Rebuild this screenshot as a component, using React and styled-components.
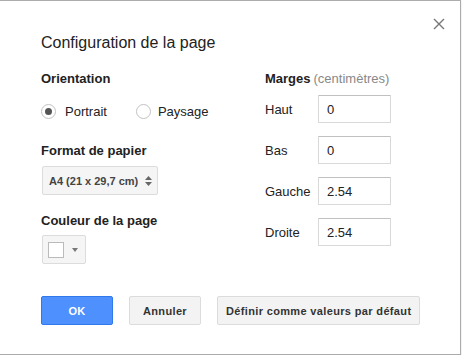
import React from 'react';
import styled, { createGlobalStyle } from 'styled-components';

const GlobalStyle = createGlobalStyle`
  html, body {
    margin: 0;
    padding: 0;
    background: #fff;
  }
  body {
    font-family: "Liberation Sans", Arial, sans-serif;
    color: #222;
  }
`

const Dialog = styled.div`
  box-sizing: border-box;
  width: 461px;
  height: 355px;
  background: #fff;
  border-top: 1px solid #acacac;
  border-right: 1px solid #acacac;
  border-bottom: 1px solid #acacac;
  box-shadow: 0 1px 2px rgba(0, 0, 0, 0.15);
  padding: 16px 15px 0 41px;
`

const CloseRow = styled.div`
  display: flex;
  justify-content: flex-end;
  height: 11px;
`

const Close = styled.button`
  width: 12px;
  height: 12px;
  padding: 0;
  margin-top: 1px;
  border: none;
  background: none;
  cursor: pointer;
  svg {
    display: block;
  }
`

const Title = styled.div`
  margin-top: 5px;
  font-size: 16px;
  line-height: 19px;
  color: #222;
`

const Columns = styled.div`
  display: grid;
  grid-template-columns: 224px auto;
  margin-top: 19px;
`

const Column = styled.div`
  display: flex;
  flex-direction: column;
  align-items: flex-start;
`

const Heading = styled.div`
  font-size: 13px;
  line-height: 15px;
  font-weight: bold;
  color: #222;
  margin-top: ${p => p.$top || 0}px;
`

const Hint = styled.span`
  font-weight: normal;
  color: #888;
  margin-left: 3px;
`

const RadioRow = styled.div`
  display: flex;
  align-items: center;
  height: 16px;
  margin-top: 17px;
  gap: 29px;
`

const RadioItem = styled.label`
  display: flex;
  align-items: center;
  font-size: 13px;
  line-height: 15px;
  color: #222;
`

const RadioCircle = styled.span`
  box-sizing: border-box;
  width: 15px;
  height: 15px;
  border: 1px solid #c2c2c2;
  border-radius: 50%;
  margin-right: ${p => (p.$checked ? 9 : 7)}px;
  display: flex;
  align-items: center;
  justify-content: center;
  &::after {
    content: '';
    display: ${p => (p.$checked ? 'block' : 'none')};
    width: 7px;
    height: 7px;
    border-radius: 50%;
    background: #555;
  }
`

const SelectBox = styled.div`
  box-sizing: border-box;
  margin-top: 8px;
  margin-left: 1px;
  width: 116px;
  height: 29px;
  display: flex;
  align-items: center;
  justify-content: space-between;
  padding: 0 5px 0 6px;
  background: #f5f5f5;
  border: 1px solid #dcdcdc;
  border-radius: 2px;
  font-size: 11px;
  font-weight: bold;
  color: #444;
`

const Arrows = styled.span`
  display: flex;
  flex-direction: column;
  gap: 2px;
`

const ColorButton = styled.div`
  box-sizing: border-box;
  margin-top: 7px;
  margin-left: 1px;
  width: 44px;
  height: 29px;
  display: flex;
  align-items: center;
  padding-left: 5px;
  gap: 8px;
  background: #f5f5f5;
  border: 1px solid #dcdcdc;
  border-radius: 2px;
`

const Swatch = styled.span`
  box-sizing: border-box;
  width: 16px;
  height: 16px;
  background: #fff;
  border: 1px solid #bbb;
`

const Caret = styled.span`
  width: 0;
  height: 0;
  border-left: 3.5px solid transparent;
  border-right: 3.5px solid transparent;
  border-top: 4px solid #777;
`

const MarginRows = styled.div`
  display: flex;
  flex-direction: column;
  gap: 13px;
  margin-top: 9px;
`

const MarginRow = styled.div`
  display: flex;
  align-items: center;
  height: 28px;
`

const MarginLabel = styled.span`
  width: 53px;
  font-size: 13px;
  line-height: 15px;
  color: #222;
`

const Input = styled.input`
  box-sizing: border-box;
  width: 73px;
  height: 28px;
  margin: 0;
  padding: 0 0 0 8px;
  border: 1px solid #d9d9d9;
  border-top-color: #c0c0c0;
  border-radius: 1px;
  font-family: "Liberation Sans", Arial, sans-serif;
  font-size: 13px;
  color: #222;
  outline: none;
`

const Footer = styled.div`
  display: flex;
  gap: 16px;
  margin-top: 32px;
`

const Button = styled.button`
  box-sizing: border-box;
  min-width: 72px;
  height: 29px;
  padding: 0 8px;
  border-radius: 2px;
  font-family: "Liberation Sans", Arial, sans-serif;
  font-size: 11px;
  font-weight: bold;
  letter-spacing: 0.35px;
  cursor: pointer;
  border: 1px solid ${p => (p.$primary ? '#3079ed' : '#dcdcdc')};
  background: ${p => (p.$primary ? '#4d90fe' : '#f3f3f3')};
  color: ${p => (p.$primary ? '#fff' : '#333')};
`

const margins = [
  ['Haut', '0'],
  ['Bas', '0'],
  ['Gauche', '2.54'],
  ['Droite', '2.54'],
]

const App = () => {
  return (
    <>
      <GlobalStyle />
      <Dialog>
        <CloseRow>
          <Close aria-label="Fermer">
            <svg width="12" height="12" viewBox="0 0 12 12">
              <path d="M1 1 L11 11 M11 1 L1 11" stroke="#777" strokeWidth="1.4" />
            </svg>
          </Close>
        </CloseRow>
        <Title>Configuration de la page</Title>
        <Columns>
          <Column>
            <Heading>Orientation</Heading>
            <RadioRow>
              <RadioItem>
                <RadioCircle $checked />
                Portrait
              </RadioItem>
              <RadioItem>
                <RadioCircle />
                Paysage
              </RadioItem>
            </RadioRow>
            <Heading $top={24}>Format de papier</Heading>
            <SelectBox>
              A4 (21 x 29,7 cm)
              <Arrows>
                <svg width="7" height="4" viewBox="0 0 7 4">
                  <path d="M0 4 L3.5 0 L7 4 Z" fill="#666" />
                </svg>
                <svg width="7" height="4" viewBox="0 0 7 4">
                  <path d="M0 0 L7 0 L3.5 4 Z" fill="#666" />
                </svg>
              </Arrows>
            </SelectBox>
            <Heading $top={18}>Couleur de la page</Heading>
            <ColorButton>
              <Swatch />
              <Caret />
            </ColorButton>
          </Column>
          <Column>
            <Heading>
              Marges<Hint>(centimètres)</Hint>
            </Heading>
            <MarginRows>
              {margins.map(([label, value]) => (
                <MarginRow key={label}>
                  <MarginLabel>{label}</MarginLabel>
                  <Input defaultValue={value} />
                </MarginRow>
              ))}
            </MarginRows>
          </Column>
        </Columns>
        <Footer>
          <Button $primary>OK</Button>
          <Button>Annuler</Button>
          <Button>Définir comme valeurs par défaut</Button>
        </Footer>
      </Dialog>
    </>
  )
}

export default App;
